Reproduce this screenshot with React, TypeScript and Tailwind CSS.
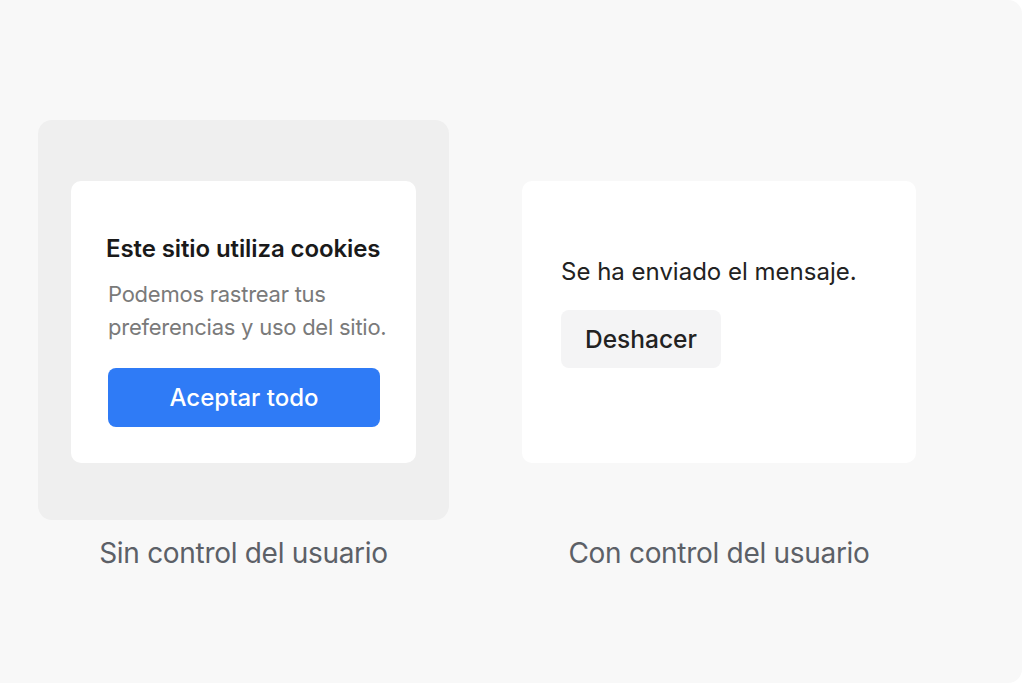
import React from 'react';

const font = { fontFamily: 'Inter, "Noto Sans", sans-serif' };

const CookieBanner: React.FC = () => (
  <div className="w-[345px] h-[282px] bg-white rounded-[10px] pt-[54px] pl-[35px] pr-[30px]">
    <h2 className="text-[24px] leading-[28px] font-semibold text-[#1a1a1a] tracking-[-0.1px] whitespace-nowrap">Este sitio utiliza cookies</h2>
    <p className="mt-[15px] pl-[2px] text-[22px] leading-[33px] text-[#7a7a7a] tracking-[-0.25px] whitespace-nowrap">
      Podemos rastrear tus
      <br />
      preferencias y uso del sitio.
    </p>
    <button className="mt-[24px] ml-[2px] w-[272px] h-[59px] rounded-[8px] bg-[#2f7bf6] text-white text-[24px] font-medium flex items-center justify-center">
      Aceptar todo
    </button>
  </div>
);

const UndoToast: React.FC = () => (
  <div className="w-[394px] h-[282px] bg-white rounded-[10px] pt-[76px] pl-[39px]">
    <p className="text-[24px] leading-[30px] text-[#222] whitespace-nowrap">Se ha enviado el mensaje.</p>
    <button className="mt-[23px] w-[160px] h-[58px] rounded-[8px] bg-[#f4f4f5] text-[#222] text-[24.5px] font-medium flex items-center justify-center">
      Deshacer
    </button>
  </div>
);

export default function App() {
  return (
    <div className="w-[1024px] h-[683px] bg-white overflow-hidden" style={font}>
      <div className="w-[1022px] h-full bg-[#f8f8f8] rounded-r-[14px] pl-[38px] pt-[120px]">
        <div className="flex gap-[73px]">
          <div className="flex flex-col items-center">
            <div className="w-[411px] h-[400px] pt-[4px] bg-[#efefef] rounded-[14px] flex items-center justify-center">
              <CookieBanner />
            </div>
            <span className="mt-[16px] text-[28px] leading-[34px] text-[#5c6067] tracking-[-0.3px] whitespace-nowrap">Sin control del usuario</span>
          </div>
          <div className="flex flex-col items-center">
            <div className="h-[400px] pt-[4px] flex items-center">
              <UndoToast />
            </div>
            <span className="mt-[16px] text-[28px] leading-[34px] text-[#5c6067] tracking-[-0.3px] whitespace-nowrap">Con control del usuario</span>
          </div>
        </div>
      </div>
    </div>
  );
}
